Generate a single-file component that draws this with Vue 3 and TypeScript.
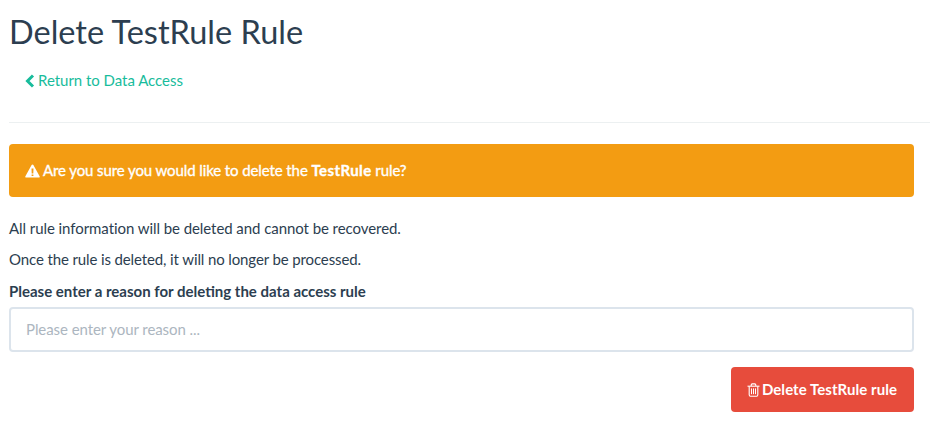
<script setup lang="ts">
const ruleName = 'TestRule'
</script>

<template>
  <div class="page">
    <h1 class="title">Delete {{ ruleName }} Rule</h1>
    <a class="back" href="#">
      <svg class="chevron" width="10" height="14" viewBox="0 0 10 14">
        <path d="M8 1.5 2.5 7 8 12.5" fill="none" stroke="currentColor" stroke-width="3" />
      </svg>
      <span>Return to Data Access</span>
    </a>
    <hr class="divider" />
    <div class="alert">
      <svg class="warn" width="15" height="14" viewBox="0 0 15 14">
        <path
          fill-rule="evenodd"
          d="M7.5.6c.4 0 .7.2.9.5l6.2 11.2c.4.7 0 1.3-.8 1.3H1.2c-.8 0-1.2-.6-.8-1.3L6.6 1.1c.2-.3.5-.5.9-.5ZM6.5 4.4l.2 5h1.6l.2-5h-2Zm.1 6v1.7h1.8v-1.7H6.6Z"
          fill="currentColor"
        />
      </svg>
      <span class="alert-text">Are you sure you would like to delete the <strong>{{ ruleName }}</strong> rule?</span>
    </div>
    <p class="info first">All rule information will be deleted and cannot be recovered.</p>
    <p class="info second">Once the rule is deleted, it will no longer be processed.</p>
    <label class="label" for="reason">Please enter a reason for deleting the data access rule</label>
    <input id="reason" class="input" type="text" placeholder="Please enter your reason ..." />
    <div class="actions">
      <button class="delete" type="button">
        <svg class="trash" width="13" height="14" viewBox="0 0 13 14" fill="none" stroke="currentColor">
          <path d="M.5 3.2h12" stroke-width="1.1" />
          <path d="M4.2 3V1.9c0-.6.4-1 1-1h2.6c.6 0 1 .4 1 1V3" stroke-width="1.1" />
          <path d="M2.2 3.2v8.6c0 .9.5 1.5 1.2 1.5h6.2c.7 0 1.2-.6 1.2-1.5V3.2" stroke-width="1.1" />
          <path d="M4.5 5.4v5.8M6.5 5.4v5.8M8.5 5.4v5.8" stroke-width="1" />
        </svg>
        <span class="delete-text">Delete {{ ruleName }} rule</span>
      </button>
    </div>
  </div>
</template>

<style scoped>
.page {
  padding: 0 16px 0 9px;
  font-family: Lato, "Open Sans", sans-serif;
  font-size: 15px;
  line-height: 1.42857;
  color: #2c3e50;
}

.title {
  margin: 0;
  padding-top: 10px;
  font-size: 32.5px;
  font-weight: 400;
  line-height: 44px;
}

.back {
  display: flex;
  align-items: center;
  gap: 3px;
  margin: 16px 0 0 16px;
  line-height: 21px;
  color: #18bc9c;
  text-decoration: none;
  letter-spacing: -0.03px;
}

.divider {
  margin: 31px -16px 21px 0;
  border: 0;
  border-top: 1px solid #ecf0f1;
}

.alert {
  display: flex;
  align-items: center;
  gap: 3px;
  height: 53px;
  box-sizing: border-box;
  padding: 0 16px;
  border-radius: 4px;
  background: #f39c12;
  color: #fff;
}

.alert-text {
  letter-spacing: -0.1px;
  -webkit-text-stroke: 0.35px #fff;
}

.alert-text strong {
  font-weight: 700;
  letter-spacing: 0.4px;
}

.info {
  margin: 0 0 10px;
  line-height: 21px;
}

.first {
  margin-top: 21px;
  letter-spacing: -0.065px;
}

.second {
  margin-bottom: 11px;
  letter-spacing: -0.12px;
}

.label {
  display: block;
  margin-bottom: 5px;
  font-weight: 700;
  line-height: 21px;
}

.input {
  display: block;
  width: 100%;
  height: 45px;
  box-sizing: border-box;
  padding: 0 15px 2px;
  border: 2px solid #dce4ec;
  border-radius: 4px;
  outline: none;
  font: inherit;
  color: #2c3e50;
  letter-spacing: -0.07px;
}

.input::placeholder {
  color: #acb6c0;
  opacity: 1;
}

.actions {
  display: flex;
  justify-content: flex-end;
  margin-top: 15px;
}

.delete {
  display: flex;
  align-items: center;
  gap: 2px;
  height: 45px;
  padding: 0 17px 0 16px;
  border: 0;
  border-radius: 4px;
  background: #e74c3c;
  color: #fff;
  font: inherit;
  font-weight: 700;
}

.delete-text {
  letter-spacing: 0.05px;
}
</style>
